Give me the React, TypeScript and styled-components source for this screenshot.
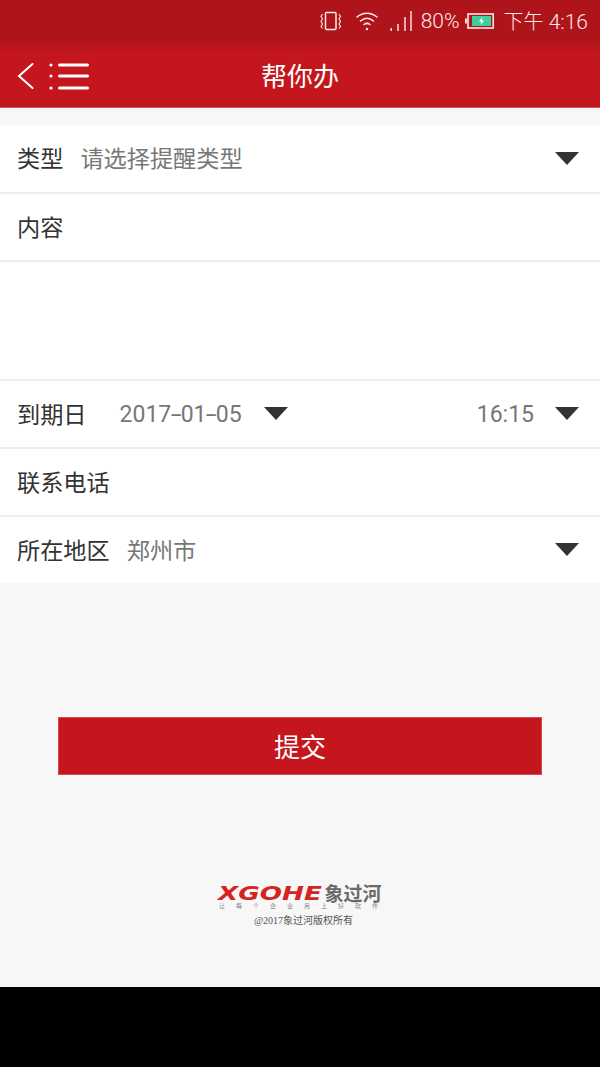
import React from "react";
import styled, { createGlobalStyle } from "styled-components";

const Global = createGlobalStyle`
  html, body { margin: 0; padding: 0; background: #000; }
  body { font-family: Roboto, "Noto Sans CJK SC", sans-serif; }
  * { box-sizing: border-box; }
`;
const Page = styled.div`
  width: 600px; height: 1067px; display: flex; flex-direction: column; background: #000; overflow: hidden;
`;
const Screen = styled.div`
  height: 987px; background: #f7f7f7; display: flex; flex-direction: column;
`;
const StatusBar = styled.div`
  height: 42px; background: #b0141b; display: flex; align-items: center; justify-content: flex-end;
  padding: 0 12px 0 0; color: #fbeaea; font-size: 21px; font-weight: 300;
`;
const Slot = styled.span<{ $left: number }>`
  display: flex; align-items: center; flex: none; margin-left: ${p => p.$left}px;
`;
const StatusText = styled.span<{ $left: number }>`
  margin-left: ${p => p.$left}px; white-space: nowrap; line-height: 42px;
`;
const StatusCjk = styled.span`
  font-family: "Noto Sans CJK SC", sans-serif; font-size: 20px; font-weight: 300;
`;
const NavBar = styled.div`
  height: 66px; background: linear-gradient(#b3141b 0, #c5161d 12px, #c5161d 52px, #bd151c 66px);
  display: grid; grid-template-columns: 1fr auto 1fr; align-items: center; padding: 0 17px;
  border-bottom: 1px solid #d9565b;
`;
const NavIcons = styled.div`
  display: flex; align-items: center; gap: 14px;
`;
const NavTitle = styled.div`
  color: #fff; font-size: 26px; font-family: "Noto Sans CJK SC", sans-serif; line-height: 66px; margin-bottom: 2px;
`;
const Form = styled.div`
  margin-top: 17px; background: #fff; display: flex; flex-direction: column;
`;
const Row = styled.div<{ $h: number; $last?: boolean }>`
  height: ${p => p.$h}px; display: flex; align-items: center; padding: 0 21px 0 17px;
  border-bottom: ${p => (p.$last ? "none" : "2px solid #eeeeee")};
`;
const Label = styled.span`
  font-family: "Noto Sans CJK SC", sans-serif; font-size: 23.2px; color: #333; white-space: nowrap; margin-bottom: 3px;
`;
const Value = styled.span<{ $left: number; $grow?: boolean }>`
  font-family: Roboto, sans-serif; font-size: 23px; color: #777; white-space: nowrap;
  margin-left: ${p => p.$left}px; ${p => (p.$grow ? "flex: 1;" : "")}
`;
const CjkValue = styled(Value)`
  font-family: "Noto Sans CJK SC", sans-serif; font-size: 23.2px; margin-bottom: 3px;
`;
const Dash = styled.span`
  display: inline-block; margin: 0 1.5px; transform: scaleX(1.7);
`;
const Caret = styled.span<{ $left?: number }>`
  width: 0; height: 0; flex: none; border-left: 12px solid transparent; border-right: 12px solid transparent;
  border-top: 13px solid #333; margin-left: ${p => p.$left ?? 0}px; margin-bottom: 1px;
`;
const Spacer = styled.span`
  flex: 1;
`;
const ButtonWrap = styled.div`
  display: flex; justify-content: center; padding-top: 134px;
`;
const Submit = styled.button`
  width: 484px; height: 58px; background: #c5161d; border: 1px solid #d34a50; color: #fff;
  font-family: "Noto Sans CJK SC", sans-serif; font-size: 26px; padding: 0 0 2px;
`;
const Logo = styled.div`
  margin-top: 109px; display: flex; flex-direction: column; align-items: center;
`;
const LogoMain = styled.div`
  display: flex; align-items: center; height: 18px; gap: 2px;
`;
const LogoLatin = styled.span`
  display: block; width: 104px; font-family: "DejaVu Sans", sans-serif; font-weight: 700; font-style: italic; font-size: 20px;
  color: #d3241f; line-height: 18px; transform: scaleX(1.31); transform-origin: left center; white-space: nowrap;
`;
const LogoCn = styled.span`
  font-family: "Noto Sans CJK SC", sans-serif; font-weight: 700; font-size: 19px; color: #6a6a6a; line-height: 18px;
`;
const LogoSlogan = styled.div`
  font-family: "Noto Sans CJK SC", sans-serif; font-size: 6px; color: #888; letter-spacing: 11px; line-height: 7px;
  white-space: nowrap; margin-right: -8px;
`;
const Copyright = styled.div`
  font-family: "Liberation Serif", "Noto Sans CJK SC", serif; font-size: 10px; color: #555; line-height: 12px; margin-top: 6px; margin-left: 7px;
`;

const Vibrate = () => (
  <svg width="22" height="22" viewBox="0 0 22 22" fill="none" stroke="#fbeaea" strokeWidth="1.5">
    <rect x="5.5" y="2.5" width="10.5" height="17" rx="1" />
    <path d="M2.5 4 L1 6.5 L2.5 9 L1 11.5 L2.5 14 L1 16.5 L2.5 18.5 M19 4 L20.5 6.5 L19 9 L20.5 11.5 L19 14 L20.5 16.5 L19 18.5" strokeWidth="1.1" />
  </svg>
);
const Wifi = () => (
  <svg width="22" height="20" viewBox="0 0 22 20" fill="none" stroke="#fbeaea" strokeWidth="1.5" strokeLinecap="round">
    <path d="M1 6 C7 1 15 1 21 6" />
    <path d="M4.5 10 C8.5 6.5 13.5 6.5 17.5 10" />
    <path d="M8 13.5 C10 12 12 12 14 13.5" />
    <circle cx="11" cy="18" r="1.2" fill="#fbeaea" stroke="none" />
  </svg>
);
const Signal = () => (
  <svg width="22" height="22" viewBox="0 0 22 22" stroke="#fbeaea" strokeWidth="1.4" fill="none">
    <path d="M1.2 18 V21 M8 14 V21 M15 7 V21 M21 1 V21" />
  </svg>
);
const Battery = () => (
  <svg width="29" height="16" viewBox="0 0 29 16">
    <rect x="0" y="5.5" width="1.8" height="5" fill="#fbeaea" />
    <rect x="3" y="1" width="25.2" height="14" fill="none" stroke="#fbeaea" strokeWidth="1.6" />
    <rect x="7" y="3" width="19" height="10" fill="#3fcf9c" />
    <path d="M17.5 4 L14 8.5 H16.2 L15.5 12 L19 7.5 H16.8 Z" fill="#fff" />
  </svg>
);
const Back = () => (
  <svg width="18" height="28" viewBox="0 0 18 28" fill="none" stroke="#fff" strokeWidth="2" strokeLinecap="round">
    <path d="M15.5 2 L2 14 L15.5 26" />
  </svg>
);
const Menu = () => (
  <svg width="40" height="28" viewBox="0 0 40 28" fill="#fff">
    <circle cx="2" cy="3" r="1.6" /><circle cx="2" cy="14" r="1.6" /><circle cx="2" cy="26" r="1.6" />
    <rect x="9" y="1.5" width="31" height="3" rx="1.5" /><rect x="9" y="12.5" width="31" height="3" rx="1.5" /><rect x="9" y="24.5" width="31" height="3" rx="1.5" />
  </svg>
);

export default function App() {
  return (
    <Page>
      <Global />
      <Screen>
        <StatusBar>
          <Slot $left={0}><Vibrate /></Slot>
          <Slot $left={14}><Wifi /></Slot>
          <Slot $left={12}><Signal /></Slot>
          <StatusText $left={9}>80%</StatusText>
          <Slot $left={5}><Battery /></Slot>
          <StatusText $left={10}><StatusCjk>下午</StatusCjk> 4:16</StatusText>
        </StatusBar>
        <NavBar>
          <NavIcons><Back /><Menu /></NavIcons>
          <NavTitle>帮你办</NavTitle>
          <span />
        </NavBar>
        <Form>
          <Row $h={69}>
            <Label>类型</Label>
            <CjkValue $left={17} $grow>请选择提醒类型</CjkValue>
            <Caret />
          </Row>
          <Row $h={68}><Label>内容</Label></Row>
          <Row $h={119} />
          <Row $h={68}>
            <Label>到期日</Label>
            <Value $left={33}>2017<Dash>-</Dash>01<Dash>-</Dash>05</Value>
            <Caret $left={22} />
            <Spacer />
            <Value $left={0}>16:15</Value>
            <Caret $left={21} />
          </Row>
          <Row $h={68}><Label>联系电话</Label></Row>
          <Row $h={66} $last>
            <Label>所在地区</Label>
            <CjkValue $left={17} $grow>郑州市</CjkValue>
            <Caret />
          </Row>
        </Form>
        <ButtonWrap><Submit>提交</Submit></ButtonWrap>
        <Logo>
          <LogoMain>
            <LogoLatin>XGOHE</LogoLatin>
            <LogoCn>象过河</LogoCn>
          </LogoMain>
          <LogoSlogan>让每个企业用上好软件</LogoSlogan>
          <Copyright>@2017象过河版权所有</Copyright>
        </Logo>
      </Screen>
    </Page>
  );
}
